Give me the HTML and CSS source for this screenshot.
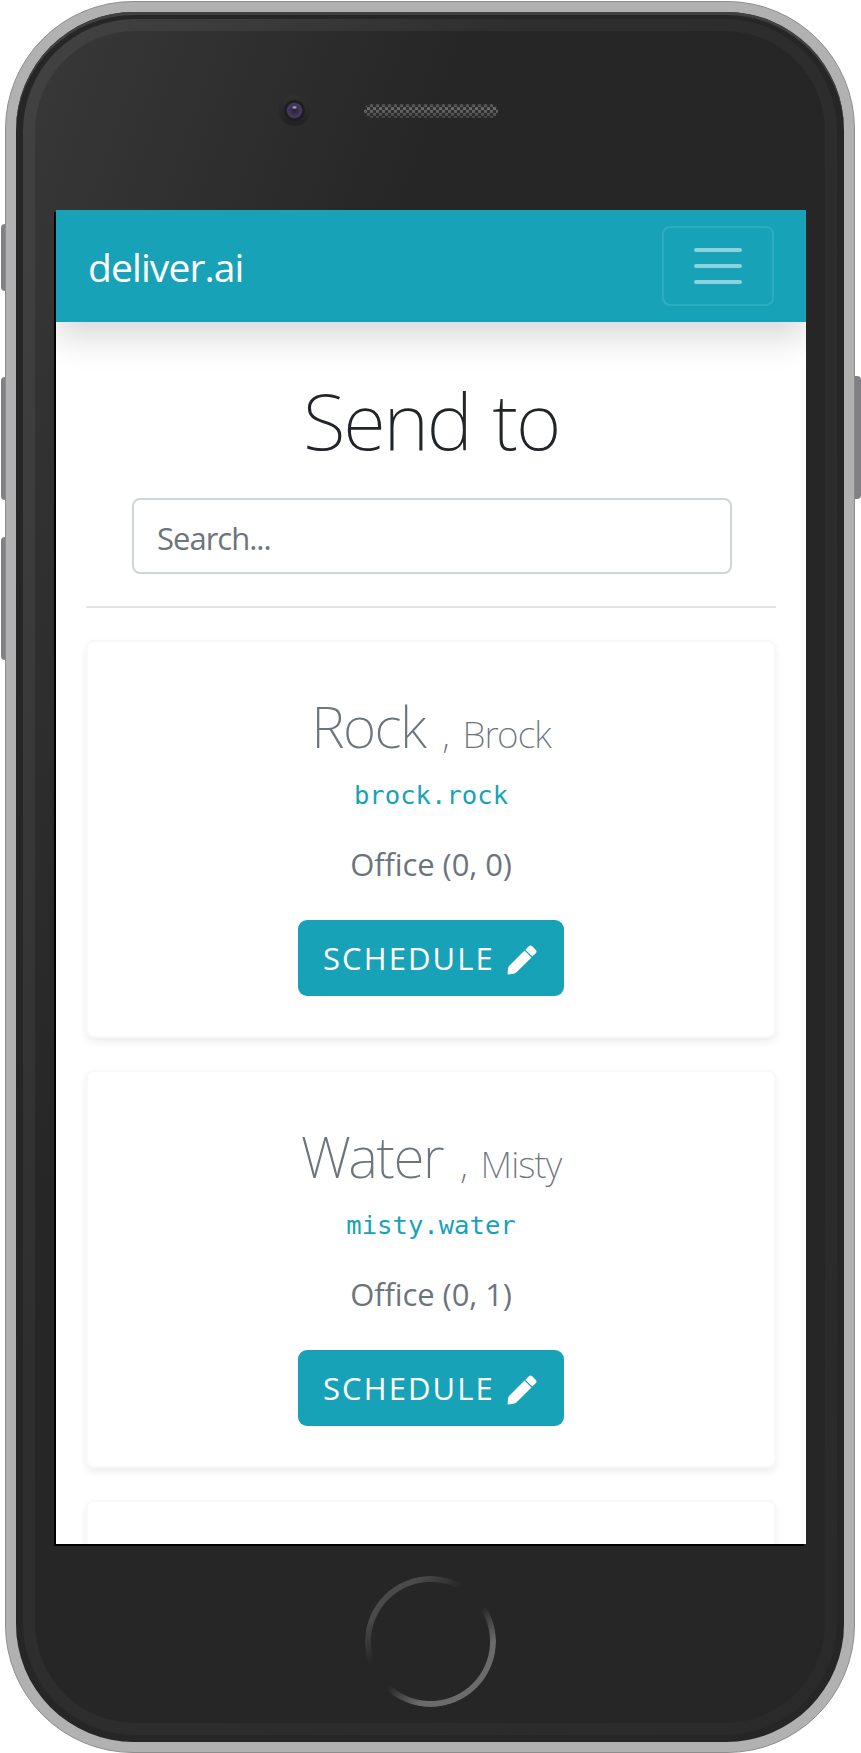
FILE: index.html
```html
<!DOCTYPE html>
<html lang="en">
<head>
<meta charset="utf-8">
<title>deliver.ai</title>
<link rel="stylesheet" href="styles.css">
</head>
<body>
<div class="device">
  <i class="side-key mute"></i><i class="side-key vol-up"></i><i class="side-key vol-down"></i><i class="side-key power"></i>
  <div class="glass"><div class="bevel"><div class="face">
    <div class="sensors">
      <i class="camera"></i>
      <svg class="speaker" width="134" height="14" viewBox="0 0 134 14">
        <defs>
          <pattern id="mesh" width="6" height="6" patternUnits="userSpaceOnUse"><path d="M0 0h3v3H0zM3 3h3v3H3z" fill="#6c6c6c"/></pattern>
          <linearGradient id="fade" x1="0" y1="0" x2="0" y2="1"><stop offset="0" stop-color="#262626" stop-opacity=".5"/><stop offset=".35" stop-color="#262626" stop-opacity="0"/><stop offset="1" stop-color="#262626" stop-opacity=".65"/></linearGradient>
        </defs>
        <rect width="134" height="14" rx="7" fill="#303030"/>
        <rect width="134" height="14" rx="7" fill="url(#mesh)"/>
        <rect width="134" height="14" rx="7" fill="url(#fade)"/>
      </svg>
    </div>
    <div class="screen">
      <nav class="navbar">
        <a class="brand">deliver.ai</a>
        <button class="toggler" aria-label="Menu"><i></i><i></i><i></i></button>
      </nav>
      <main class="content">
        <h1 class="title">Send to</h1>
        <input class="search" type="text" placeholder="Search...">
        <hr class="rule">
        <section class="card">
          <h2 class="name">Rock <small class="first">, Brock</small></h2>
          <code class="user">brock.rock</code>
          <p class="office">Office (0, 0)</p>
          <button class="schedule"><span>SCHEDULE</span><svg class="pencil" viewBox="0 0 30 30"><path d="M17.5 5.5 24.5 12.4 9.5 27.2C8.6 28.1 7.7 28.5 6.5 28.7L1.5 29.4C.8 29.5.5 29.2.6 28.5L1 23.6C1.1 22.3 1.6 21.3 2.5 20.4ZM18.3 4.7 21.8 1.3C22.8.3 24.2.3 25.2 1.3L28.8 4.9C29.8 5.9 29.8 7.2 28.8 8.2L25.3 11.6Z"/></svg></button>
        </section>
        <section class="card">
          <h2 class="name">Water <small class="first">, Misty</small></h2>
          <code class="user">misty.water</code>
          <p class="office">Office (0, 1)</p>
          <button class="schedule"><span>SCHEDULE</span><svg class="pencil" viewBox="0 0 30 30"><path d="M17.5 5.5 24.5 12.4 9.5 27.2C8.6 28.1 7.7 28.5 6.5 28.7L1.5 29.4C.8 29.5.5 29.2.6 28.5L1 23.6C1.1 22.3 1.6 21.3 2.5 20.4ZM18.3 4.7 21.8 1.3C22.8.3 24.2.3 25.2 1.3L28.8 4.9C29.8 5.9 29.8 7.2 28.8 8.2L25.3 11.6Z"/></svg></button>
        </section>
        <section class="card"></section>
      </main>
    </div>
    <div class="home"></div>
  </div></div></div>
</div>
</body>
</html>
```
FILE: styles.css
```css
* { box-sizing: border-box; }
body { margin: 0; background: #fff; overflow: hidden; font-family: "Open Sans", "Noto Sans", sans-serif; }
.device { position: relative; width: 850px; height: 1752px; margin: 1px 0 0 5px; padding: 10px; border: 1px solid #8d8d8d; border-radius: 128px; background: #b1b1b1; }
.glass { height: 1730px; padding: 7px; border-radius: 118px; background: #262626; box-shadow: inset 0 3px 0 #414141; }
.bevel { height: 1716px; padding: 12px; border-radius: 112px; background: linear-gradient(110deg, #424242 0, #3d3d3d 12%, #2e2e2e 35%, #2a2a2a 100%); }
.face { height: 1692px; padding-left: 21px; border-radius: 100px; background: linear-gradient(110deg, #383838 0, #262626 31%); }
.side-key { position: absolute; z-index: -1; left: -5px; width: 8px; background: #808086; border-radius: 4px 0 0 4px; }
.mute { top: 222px; height: 67px; }
.vol-up { top: 375px; height: 123px; }
.vol-down { top: 535px; height: 123px; }
.power { top: 374px; height: 123px; left: 847px; border-radius: 0 4px 4px 0; }
.sensors { display: flex; align-items: center; height: 179px; padding: 0 0 20px 223px; gap: 54px; }
.camera { width: 31px; height: 31px; border-radius: 50%; background: radial-gradient(ellipse 3px 2px at 50% 40%, #c9c4d2 0, transparent 100%), radial-gradient(circle, #2a2333 0, #3b2f4e 4px, #493a60 7px, #1b1a1e 8.5px, #1f1f1f 10px, transparent 11px), linear-gradient(#313131, #212121); }
.screen { width: 750px; height: 1334px; overflow: hidden; background: #fff; box-shadow: -2px 2px 0 #000; }
.navbar { position: relative; display: flex; align-items: center; justify-content: space-between; height: 112px; padding: 0 32px; background: #18a2b8; box-shadow: 0 16px 32px rgba(0,0,0,.15); }
.brand { color: #fff; font-size: 39px; letter-spacing: -.9px; }
.toggler { display: flex; flex-direction: column; align-items: center; gap: 12px; width: 112px; height: 80px; padding: 20px 0; border: 2px solid rgba(255,255,255,.1); border-radius: 8px; background: none; }
.toggler i { width: 48px; height: 4px; border-radius: 2px; background: rgba(255,255,255,.5); }
.content { display: flex; flex-direction: column; align-items: center; padding: 50px 30px 0; }
.title { height: 96px; margin: 0 0 30px; line-height: 96px; font-size: 78px; font-weight: 240; font-family: "Noto Sans"; letter-spacing: -2.2px; word-spacing: 4px; color: #212529; white-space: nowrap; }
.search { width: 600px; height: 76px; margin-left: 2px; padding: 4px 23px 0; border: 2px solid #ced4da; border-radius: 8px; background: #fff; font: 31px "Open Sans", sans-serif; letter-spacing: -1px; }
.search::placeholder { color: #6c757d; opacity: 1; }
.rule { width: 690px; height: 2px; margin: 32px 0; border: 0; background: #e5e5e5; }
.card { flex: none; display: flex; flex-direction: column; align-items: center; width: 690px; height: 398px; margin-bottom: 32px; padding-top: 50px; border: 2px solid #f8f9fa; border-radius: 8px; background: #fff; box-shadow: 0 4px 8px rgba(0,0,0,.075); color: #6c757d; }
.name { height: 68px; margin: 0 0 19px; line-height: 68px; font-size: 57px; font-weight: 240; font-family: "Noto Sans"; letter-spacing: -1.6px; word-spacing: 4px; white-space: nowrap; }
.first { font-size: 37px; font-weight: 240; letter-spacing: -.9px; word-spacing: 5px; }
.user { height: 32px; line-height: 32px; font-family: "DejaVu Sans Mono", monospace; font-size: 25.6px; color: #18a2b8; }
.office { height: 48px; margin: 29px 0 32px; line-height: 48px; font-size: 31px; letter-spacing: -.1px; }
.schedule { display: flex; flex: none; align-items: center; justify-content: space-between; width: 266px; height: 76px; padding: 0 27px 0 25px; border: 0; border-radius: 9px; background: #18a2b8; color: #fff; font: 31px "Open Sans", sans-serif; letter-spacing: 2.1px; }
.pencil { width: 30px; height: 30px; margin-top: 3px; fill: #fff; }
.home { width: 131px; height: 131px; margin: 32px 0 0 309px; border-radius: 50%; background: linear-gradient(140deg, #4a4a4a 20%, #262626 38%, #262626 54%, #6b6b6b 72%); -webkit-mask: radial-gradient(circle, transparent 59px, #000 60px); mask: radial-gradient(circle, transparent 59px, #000 60px); }
```
